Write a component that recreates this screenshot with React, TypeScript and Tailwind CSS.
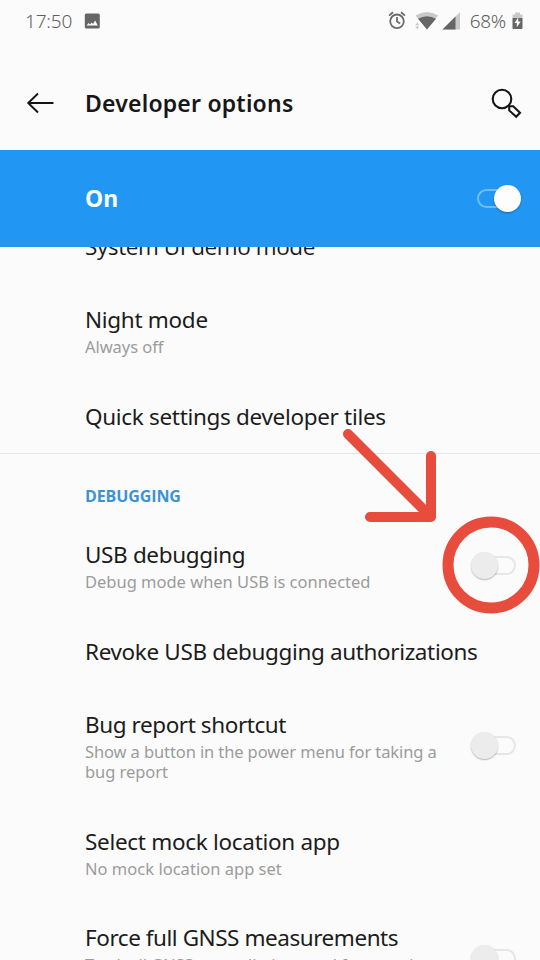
import React from "react";

type RowProps = {
  title: string;
  tracking: string;
  lines?: { text: string; tracking: string }[];
  toggle?: boolean;
};

function Toggle({ on = false }: { on?: boolean }) {
  return on ? (
    <div className="flex h-[27px] w-11 shrink-0 items-center">
      <div className="h-[19px] w-9 rounded-full border-[2.5px] border-[#6fbcfa]" />
      <div className="-ml-[19px] size-[27px] shrink-0 rounded-full bg-[#fdfdfd] shadow-[0_1px_2px_rgba(0,0,0,0.3)]" />
    </div>
  ) : (
    <div className="mb-[2px] flex h-[27px] w-[45px] shrink-0 items-center">
      <div className="z-10 size-[27px] shrink-0 rounded-full bg-[#ececec] shadow-[0_1px_1.5px_rgba(0,0,0,0.28)]" />
      <div className="-ml-[18px] h-[19px] w-9 shrink-0 rounded-full border-[2.5px] border-[#e6e6e6]" />
    </div>
  );
}

function Row({ title, tracking, lines = [], toggle = false }: RowProps) {
  return (
    <div className="flex shrink-0 items-center justify-between pt-[23px] pr-[24px] pb-[22.5px] pl-[85px]">
      <div className="whitespace-nowrap">
        <div className={`text-[22.5px] leading-[28px] text-[#1c1c1c] ${tracking}`}>{title}</div>
        {lines.length > 0 && (
          <div className="mt-[3px]">
            {lines.map((l) => (
              <div key={l.text} className={`text-[16.5px] leading-[20px] text-[#9b9b9b] ${l.tracking}`}>
                {l.text}
              </div>
            ))}
          </div>
        )}
      </div>
      {toggle && <Toggle />}
    </div>
  );
}

function StatusBar() {
  return (
    <div className="flex h-[42px] items-center pl-[25px] text-[#606060]">
      <span className="text-[19px] leading-[42px] font-light tracking-[-0.2px]">17:50</span>
      <svg className="mt-[-1px] ml-3" width="16" height="16" viewBox="0 0 16 16">
        <rect x="0.8" y="0.5" width="15" height="15" rx="1.6" fill="#666" />
        <path d="M2.6 12.6L4.5 10l1.4 1.5L7.6 9.5l1.4 1.6L11.2 7.5 13.8 12.6z" fill="#fbfbfb" />
      </svg>
      <svg className="ml-auto" width="82" height="24" viewBox="0 0 82 24">
        <g fill="none" stroke="#6b6b6b" strokeWidth="1.8">
          <circle cx="15" cy="12.3" r="6.8" />
          <path d="M15 8v4.6l3.2 1.9M7 6.6l4-3.3M23 6.6l-4-3.3" />
        </g>
        <path d="M33.5 6.6Q45 -0.6 56.2 6.6L45 20z" fill="#c9c9c9" />
        <path d="M36 9.8Q45 4.7 54 9.8L45 20.5z" fill="#666" />
        <path d="M33.2 16.3l2.1-2.9 2.1 2.9zM33.2 17.5l2.1 2.9 2.1-2.9z" fill="#c9c9c9" />
        <path d="M60.5 20.5L78 3v17.5z" fill="#c9c9c9" />
        <path d="M60.5 20.5L73.5 7.5v13z" fill="#666" />
      </svg>
      <span className="ml-[6px] text-[19px] leading-[42px] font-light tracking-[-0.3px]">68%</span>
      <svg className="mr-[17px] ml-[6px]" width="11" height="18" viewBox="0 0 11 18">
        <path d="M3 0.5h5v2h2.5v3.5H0.5V2.5H3z" fill="#c9c9c9" />
        <path d="M0.5 6h10V16a1 1 0 0 1-1 1h-8a1 1 0 0 1-1-1z" fill="#666" />
        <path d="M6.2 5.5L2.4 11h2.4v4.3L8.7 9.6H6.2z" fill="#fbfbfb" />
      </svg>
    </div>
  );
}

export default function App() {
  return (
    <div className="relative flex h-[960px] w-[540px] flex-col overflow-hidden bg-[#fbfbfb] font-['Noto_Sans',sans-serif]">
      <StatusBar />
      <header className="flex h-[108px] items-center pt-[14px] pr-[18px] pl-[26px]">
        <svg width="28" height="22" viewBox="0 0 28 22" fill="none" stroke="#151515" strokeWidth="1.9">
          <path d="M27.5 11H2.2M12 1.5L2.2 11 12 20.5" />
        </svg>
        <h1 className="-mt-px ml-[31px] text-[23px] leading-7 font-semibold tracking-[0.2px] whitespace-nowrap text-[#171717]">
          Developer options
        </h1>
        <svg className="-mt-px ml-auto" width="32" height="32" viewBox="0 0 32 32" fill="none" stroke="#151515" strokeWidth="2.1">
          <circle cx="12" cy="12" r="9.3" />
          <path d="M18.4 18.4l1.4 1.4M19.2 23.4v-4.2h4l6.8 6.6-3.8 4z" />
        </svg>
      </header>
      <div className="flex h-[97px] shrink-0 items-center justify-between bg-[#2196f3] pr-[19px] pl-[85px]">
        <span className="-mt-0.5 text-[23px] leading-7 font-bold text-[#f6fbff]">On</span>
        <Toggle on />
      </div>

      <main className="flex min-h-0 flex-1 flex-col overflow-hidden">
        <div className="-mt-[37.5px] flex flex-col">
          <div className="font-['Open_Sans',sans-serif]">
            <Row title="System UI demo mode" tracking="tracking-[-0.4px]" />
          </div>
          <Row title="Night mode" tracking="tracking-[-0.3px]" lines={[{ text: "Always off", tracking: "tracking-[-0.05px]" }]} />
          <Row title="Quick settings developer tiles" tracking="tracking-[-0.32px]" />
          <div className="h-px shrink-0 bg-[#e6e6e6]" />
          <div className="flex h-[64px] shrink-0 items-center pt-[20px] pl-[85px] font-['Open_Sans',sans-serif] text-[16px] leading-5 font-bold tracking-[-0.1px] text-[#3c92d8]">
            DEBUGGING
          </div>
          <Row
            title="USB debugging"
            tracking="tracking-[-0.35px]"
            lines={[{ text: "Debug mode when USB is connected", tracking: "tracking-[-0.01px]" }]}
            toggle
          />
          <Row title="Revoke USB debugging authorizations" tracking="tracking-[-0.36px]" />
          <Row
            title="Bug report shortcut"
            tracking="tracking-[-0.42px]"
            lines={[
              { text: "Show a button in the power menu for taking a", tracking: "tracking-[-0.11px]" },
              { text: "bug report", tracking: "tracking-[-0.05px]" },
            ]}
            toggle
          />
          <Row
            title="Select mock location app"
            tracking="tracking-[-0.3px]"
            lines={[{ text: "No mock location app set", tracking: "tracking-[0.02px]" }]}
          />
          <Row
            title="Force full GNSS measurements"
            tracking="tracking-[-0.45px]"
            lines={[
              { text: "Track all GNSS constellations and frequencies", tracking: "tracking-[-0.11px]" },
              { text: "with no duty cycling", tracking: "tracking-[-0.1px]" },
            ]}
            toggle
          />
        </div>
      </main>

      {/* Hand-drawn callout pointing at the USB debugging switch */}
      <svg className="pointer-events-none absolute top-[420px] left-[330px]" width="210" height="200" viewBox="330 420 210 200" fill="none" stroke="#e84c3d">
        <path d="M348 434L431 517M431 456V517H370" strokeWidth="10" strokeLinecap="round" strokeLinejoin="round" />
        <circle cx="491" cy="565" r="43" strokeWidth="11" />
      </svg>
    </div>
  );
}
